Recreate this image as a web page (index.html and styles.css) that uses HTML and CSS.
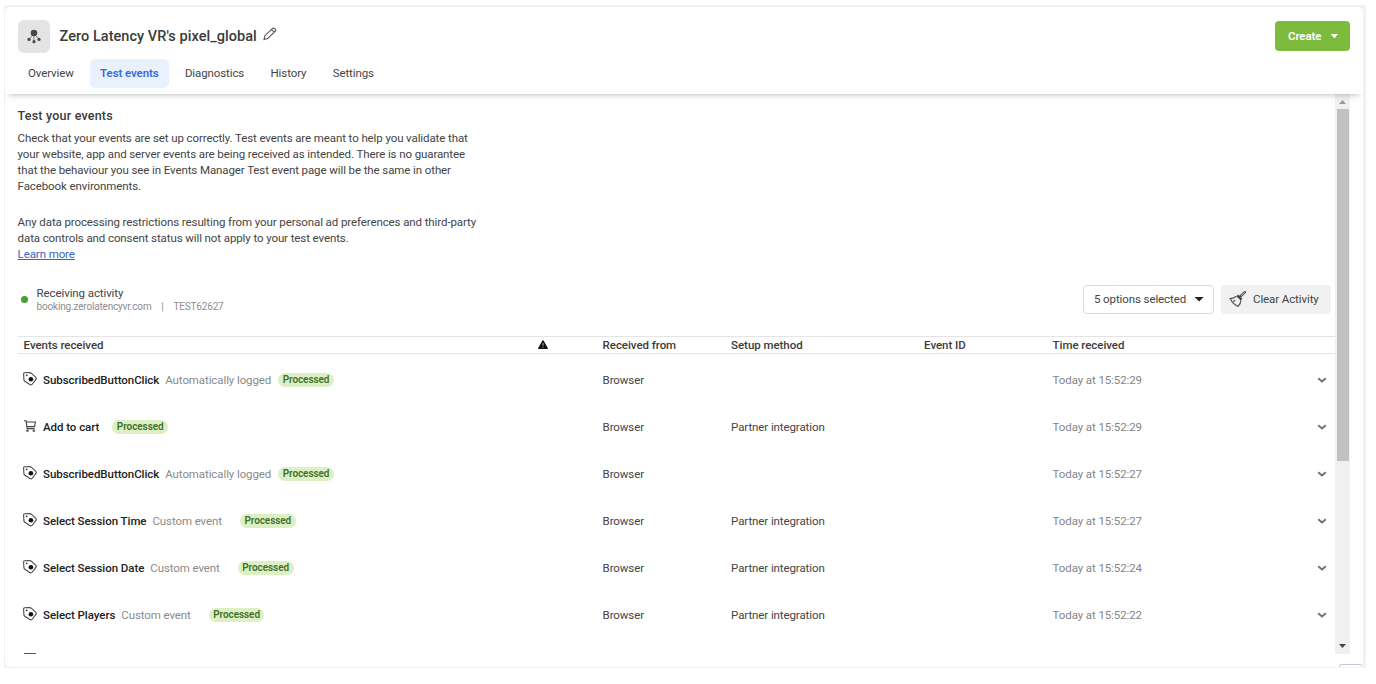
FILE: index.html
```html
<!DOCTYPE html>
<html lang="en">
<head>
    <meta charset="UTF-8">
    <meta name="viewport" content="width=device-width, initial-scale=1.0">
    <title>Events Manager - Test events</title>
    <link rel="stylesheet" href="styles.css">
</head>
<body>

<!-- shared icons -->
<svg class="sprite" aria-hidden="true">
    <symbol id="tag" viewBox="0 0 14 14">
        <path d="M1.6 .8 L6.5 .6 Q7.5 .6 8.3 1.2 L12.8 5.3 Q13.7 6.3 12.9 7.4 L9.4 12 Q8.5 13.3 7.2 12.7 L1.9 9.3 Q1 8.6 .9 7.6 L.6 1.8 Q.6 .9 1.6 .8Z" fill="none" stroke="#4a4a4a" stroke-width="1.1"/>
        <circle cx="3.7" cy="3.3" r=".9" fill="#333"/>
        <circle cx="7.9" cy="7.2" r="2.3" fill="#111"/>
    </symbol>
    <symbol id="cart" viewBox="0 0 12 12">
        <path d="M0 .8H2.1L3.1 8.6H10.6M2.4 2H11.4L10.5 6.6H3" fill="none" stroke="#444" stroke-width="1.1"/>
        <circle cx="3.5" cy="10.7" r=".9" fill="#777" stroke="#444" stroke-width=".8"/>
        <circle cx="9.8" cy="10.7" r=".9" fill="#777" stroke="#444" stroke-width=".8"/>
    </symbol>
    <symbol id="chevron" viewBox="0 0 10 6">
        <path d="M1.2 1.2L5 4.4L8.8 1.2" fill="none" stroke="#6b7078" stroke-width="1.9"/>
    </symbol>
</svg>

<div class="frame">
<div class="panel">
    <header class="header">
        <div class="title-row">
            <div class="pixel-icon">
                <svg width="14" height="15" viewBox="0 0 14 15">
                    <path d="M7 5V12M6 6L2.2 10M8 6L11.8 10" stroke="#8a8c8f" stroke-width="1" fill="none"/>
                    <circle cx="7" cy="4" r="3.3" fill="#45494e"/>
                    <circle cx="2" cy="10.4" r="1.6" fill="#45494e"/>
                    <circle cx="7" cy="12.7" r="1.6" fill="#45494e"/>
                    <circle cx="12" cy="10.4" r="1.6" fill="#45494e"/>
                </svg>
            </div>
            <h1>Zero Latency VR's pixel_global</h1>
            <svg class="pencil" width="14" height="14" viewBox="0 0 14 14">
                <path d="M1 12.6L1.9 8.7L9.6 1.4Q10.5 .7 11.5 1.5L12.3 2.2Q13.2 3.1 12.4 4L4.7 11.6ZM8.5 2.6L11.3 5.2" fill="none" stroke="#555" stroke-width="1.1"/>
            </svg>
            <button class="create">Create <span class="caret"></span></button>
        </div>
        <nav class="tabs">
            <a>Overview</a>
            <a class="active">Test events</a>
            <a>Diagnostics</a>
            <a>History</a>
            <a>Settings</a>
        </nav>
    </header>

    <div class="body">
        <main class="content">
            <h2>Test your events</h2>
            <p>Check that your events are set up correctly. Test events are meant to help you validate that<br>
            your website, app and server events are being received as intended. There is no guarantee<br>
            that the behaviour you see in Events Manager Test event page will be the same in other<br>
            Facebook environments.</p>
            <p class="second">Any data processing restrictions resulting from your personal ad preferences and third-party<br>
            data controls and consent status will not apply to your test events.<br>
            <a class="link">Learn more</a></p>

            <div class="activity">
                <span class="dot"></span>
                <div class="activity-text">
                    <div class="receiving">Receiving activity</div>
                    <div class="source"><span class="domain">booking.zerolatencyvr.com</span><span class="bar">|</span><span>TEST62627</span></div>
                </div>
                <button class="options">5 options selected <span class="caret dark"></span></button>
                <button class="clear">
                    <svg width="18" height="18" viewBox="0 0 18 18">
                        <path d="M15.9 2.1L11.5 6.2" stroke="#555" stroke-width="2.6" stroke-linecap="round"/>
                        <path d="M15.8 2.2L12 5.7" stroke="#ccc" stroke-width=".9"/>
                        <path d="M8.2 5.4L12.6 9.6" stroke="#444" stroke-width="2.4"/>
                        <path d="M7.5 6.2Q5 8.2 1.2 8.6Q4 14.5 9 16.4Q11.7 14 11.9 10.4M4.2 11.6L6.4 10.2" fill="none" stroke="#555" stroke-width="1.2"/>
                    </svg>
                    Clear Activity
                </button>
            </div>

            <table>
                <colgroup>
                    <col class="c-event"><col class="c-warn"><col class="c-from"><col class="c-setup"><col class="c-id"><col class="c-time"><col class="c-more">
                </colgroup>
                <thead>
                    <tr>
                        <th>Events received</th>
                        <th><svg class="warn" width="10" height="9" viewBox="0 0 10 9"><path d="M5 .8L9.3 8.3H.7Z" fill="#111" stroke="#111" stroke-width="1.2" stroke-linejoin="round"/><path d="M5 3V5.7M5 6.7V7.7" stroke="#ccc" stroke-width=".9"/></svg></th>
                        <th>Received from</th>
                        <th>Setup method</th>
                        <th>Event ID</th>
                        <th>Time received</th>
                        <th></th>
                    </tr>
                </thead>
                <tbody>
                    <tr>
                        <td><div class="event"><svg class="icon"><use href="#tag"/></svg><b>SubscribedButtonClick</b><span class="kind auto">Automatically logged</span><span class="badge">Processed</span></div></td>
                        <td></td><td>Browser</td><td></td><td></td><td class="time">Today at 15:52:29</td>
                        <td><svg class="chevron"><use href="#chevron"/></svg></td>
                    </tr>
                    <tr>
                        <td><div class="event"><svg class="icon cart"><use href="#cart"/></svg><b>Add to cart</b><span class="kind none"></span><span class="badge">Processed</span></div></td>
                        <td></td><td>Browser</td><td>Partner integration</td><td></td><td class="time">Today at 15:52:29</td>
                        <td><svg class="chevron"><use href="#chevron"/></svg></td>
                    </tr>
                    <tr>
                        <td><div class="event"><svg class="icon"><use href="#tag"/></svg><b>SubscribedButtonClick</b><span class="kind auto">Automatically logged</span><span class="badge">Processed</span></div></td>
                        <td></td><td>Browser</td><td></td><td></td><td class="time">Today at 15:52:27</td>
                        <td><svg class="chevron"><use href="#chevron"/></svg></td>
                    </tr>
                    <tr>
                        <td><div class="event"><svg class="icon"><use href="#tag"/></svg><b>Select Session Time</b><span class="kind">Custom event</span><span class="badge">Processed</span></div></td>
                        <td></td><td>Browser</td><td>Partner integration</td><td></td><td class="time">Today at 15:52:27</td>
                        <td><svg class="chevron"><use href="#chevron"/></svg></td>
                    </tr>
                    <tr>
                        <td><div class="event"><svg class="icon"><use href="#tag"/></svg><b>Select Session Date</b><span class="kind">Custom event</span><span class="badge">Processed</span></div></td>
                        <td></td><td>Browser</td><td>Partner integration</td><td></td><td class="time">Today at 15:52:24</td>
                        <td><svg class="chevron"><use href="#chevron"/></svg></td>
                    </tr>
                    <tr>
                        <td><div class="event"><svg class="icon"><use href="#tag"/></svg><b>Select Players</b><span class="kind">Custom event</span><span class="badge">Processed</span></div></td>
                        <td></td><td>Browser</td><td>Partner integration</td><td></td><td class="time">Today at 15:52:22</td>
                        <td><svg class="chevron"><use href="#chevron"/></svg></td>
                    </tr>
                </tbody>
            </table>
            <div class="next-row"></div>
        </main>
        <div class="scrollbar">
            <span class="arrow up"></span>
            <div class="thumb"></div>
            <span class="arrow down"></span>
        </div>
    </div>
    <div class="corner"></div>
</div>
</div>

</body>
</html>
```
FILE: styles.css
```css
* {
    box-sizing: border-box;
}
body {
    margin: 0;
    padding: 5px 10px 0 4px;
    background-color: #fff;
    font-family: Roboto, "Liberation Sans", sans-serif;
    font-size: 11.5px;
    letter-spacing: -0.1px;
    color: #444;
}
.sprite {
    display: none;
}
.frame {
    height: 663px;
    padding: 2px 3px 1px 1px;
    background-color: #f2f2f2;
}
.panel {
    position: relative;
    height: 660px;
    background-color: #fff;
    border-radius: 6px;
    overflow: hidden;
}
button {
    font: inherit;
    letter-spacing: inherit;
    display: flex;
    align-items: center;
    border: none;
}

/* header */
.header {
    position: relative;
    height: 87px;
    padding: 13px 13px 0;
    background-color: #fff;
    box-shadow: 0 5px 6px -4px rgba(0, 0, 0, 0.25);
}
.title-row {
    display: flex;
    align-items: center;
    height: 33px;
}
.pixel-icon {
    display: flex;
    align-items: center;
    justify-content: center;
    width: 32px;
    height: 33px;
    padding-bottom: 1px;
    background-color: #e4e4e4;
    border-radius: 6px;
}
h1 {
    margin: 0 0 0 9.5px;
    font-size: 14.5px;
    letter-spacing: 0.05px;
    font-weight: 500;
    color: #3b3b3b;
}
.pencil {
    margin: -5px 0 0 6.5px;
}
.create {
    width: 75px;
    height: 30px;
    margin: -1px 0 0 auto;
    padding: 0 0 0 13px;
    background-color: #7cbb3c;
    color: #fff;
    font-weight: 600;
    border-radius: 4px;
}
.caret {
    width: 8px;
    height: 5px;
    margin-left: 9px;
    background-color: #fff;
    clip-path: polygon(0 0, 100% 0, 50% 100%);
}
.caret.dark {
    width: 10px;
    margin-left: 8px;
    background-color: #222;
}
.tabs {
    display: flex;
    margin-top: 6px;
}
.tabs a {
    height: 29px;
    padding: 0 10px;
    margin-right: 6.3px;
    line-height: 28px;
    border-radius: 5px;
}
.tabs .active {
    background-color: #e9f1fd;
    color: #3b6be0;
    font-weight: 600;
}

/* page body */
.body {
    display: flex;
    height: 560px;
}
.content {
    width: 1330px;
    padding: 14px 0 0 12.6px;
    overflow: hidden;
}
h2 {
    margin: 0 0 6px;
    font-size: 12.5px;
    letter-spacing: 0.2px;
    line-height: 16px;
    font-weight: 500;
    color: #3b3b3b;
}
p {
    margin: 0;
    line-height: 16px;
}
.second {
    margin-top: 20px;
}
.link {
    color: #3a62c0;
    text-decoration: underline;
}
.activity {
    display: flex;
    align-items: center;
    height: 30px;
    margin-top: 22px;
    padding-right: 4px;
}
.dot {
    width: 7px;
    height: 7px;
    margin: 0 9px 0 3px;
    border-radius: 50%;
    background-color: #46a032;
}
.activity-text {
    padding-top: 2px;
    line-height: 14px;
}
.source {
    display: flex;
    font-size: 10px;
    letter-spacing: -0.18px;
    color: #8d8d8d;
}
.bar {
    width: 22px;
    text-align: center;
}
.options {
    width: 131px;
    height: 29px;
    margin-left: auto;
    padding: 0 0 0 10px;
    background-color: #fff;
    border: 1px solid #dadada;
    border-radius: 4px;
    color: #444;
}
.clear {
    width: 110px;
    height: 29px;
    margin-left: 7px;
    padding: 0 0 0 8px;
    background-color: #f1f1f1;
    border-radius: 4px;
    color: #444;
}
.clear svg {
    margin-right: 6px;
}

/* events table */
table {
    width: 1317px;
    margin-top: 22px;
    border-collapse: separate;
    border-spacing: 0;
    table-layout: fixed;
}
.c-event { width: 514px; }
.c-warn { width: 65px; }
.c-from { width: 128.5px; }
.c-setup { width: 193px; }
.c-id { width: 128.5px; }
.c-time { width: 264.5px; }
th {
    height: 18px;
    padding: 0 0 0 6px;
    border-top: 1px solid #e4e4e4;
    border-bottom: 1px solid #e4e4e4;
    text-align: left;
    font-weight: 500;
    letter-spacing: -0.05px;
    color: #3b3b3b;
}
td {
    height: 46.9px;
    padding: 6px 0 0 6px;
}
.warn {
    display: block;
    margin-top: -2px;
}
.event {
    display: flex;
    align-items: center;
}
.icon {
    width: 14px;
    height: 14px;
    margin: -2px 6px 0 -0.6px;
}
.icon.cart {
    width: 12px;
    height: 12px;
    margin: -2px 7px 0 0.4px;
}
.event b {
    font-weight: 500;
    letter-spacing: -0.05px;
    color: #222;
}
.kind {
    margin: 0 18px 0 6px;
    color: #8a8a8a;
}
.kind.auto {
    margin-right: 7px;
}
.kind.none {
    margin: 0 13px 0 0;
}
.badge {
    height: 14px;
    padding: 0 4.5px;
    border-radius: 7px;
    background-color: #dcf0c4;
    color: #44702a;
    font-size: 10px;
    letter-spacing: -0.08px;
    line-height: 14px;
    font-weight: 600;
}
.time {
    color: #858585;
}
.chevron {
    display: block;
    width: 10px;
    height: 6px;
}
/* top edge of the row cut off by the scroll area */
.next-row {
    width: 12px;
    height: 1px;
    margin: 18px 0 0 6px;
    background-color: #555;
}

/* scrollbar */
.scrollbar {
    display: flex;
    flex-direction: column;
    align-items: center;
    width: 15px;
    background-color: #f0f0f0;
}
.thumb {
    width: 12px;
    height: 352px;
    margin-top: 5px;
    background-color: #c1c1c1;
}
.arrow {
    width: 7px;
    height: 4px;
    background-color: #999;
}
.up {
    margin-top: 6px;
    clip-path: polygon(50% 0, 100% 100%, 0 100%);
}
.down {
    margin: auto 0 6px;
    background-color: #444;
    clip-path: polygon(0 0, 100% 0, 50% 100%);
}
.corner {
    position: absolute;
    right: 0;
    bottom: 0;
    width: 24px;
    height: 3px;
    border: 1px solid #c4c8d8;
    border-bottom: none;
    border-radius: 3px 3px 0 0;
}
```
